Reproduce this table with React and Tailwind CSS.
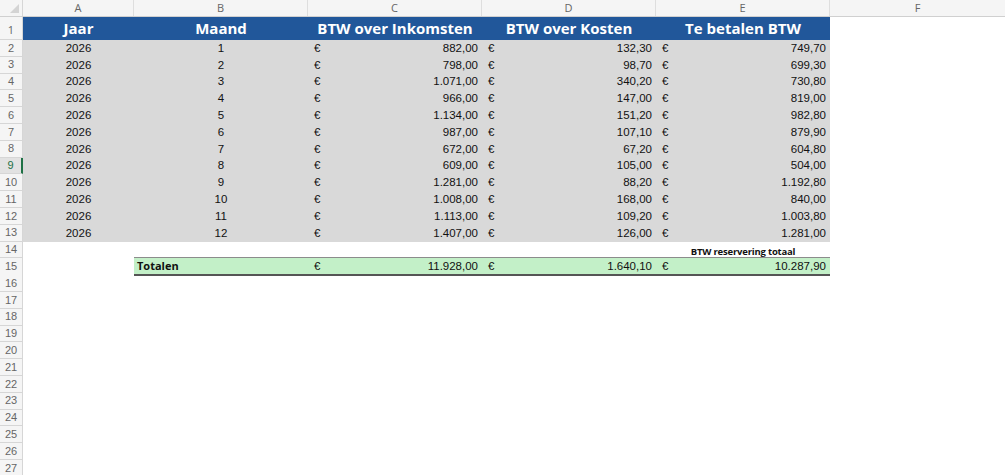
const rows = [
  [1, '882,00', '132,30', '749,70'],
  [2, '798,00', '98,70', '699,30'],
  [3, '1.071,00', '340,20', '730,80'],
  [4, '966,00', '147,00', '819,00'],
  [5, '1.134,00', '151,20', '982,80'],
  [6, '987,00', '107,10', '879,90'],
  [7, '672,00', '67,20', '604,80'],
  [8, '609,00', '105,00', '504,00'],
  [9, '1.281,00', '88,20', '1.192,80'],
  [10, '1.008,00', '168,00', '840,00'],
  [11, '1.113,00', '109,20', '1.003,80'],
  [12, '1.407,00', '126,00', '1.281,00'],
]

const cols = ['A', 'B', 'C', 'D', 'E']
const widths = ['w-[111px]', 'w-[174px]', 'w-[174px]', 'w-[174px]', 'w-[174px]']

function RowHead({ n, selected }) {
  return (
    <div
      className={
        'w-[23px] shrink-0 flex items-center justify-center border-b border-r border-[#d6d6d6] text-[11px] ' +
        (selected ? 'bg-[#e2e2e2] text-[#1e7145] border-r-2 border-r-[#1e7145]' : 'bg-[#f5f5f5] text-[#666]')
      }
    >
      {n}
    </div>
  )
}

function Money({ value, w = 'w-[174px]' }) {
  return (
    <div className={w + ' shrink-0 flex items-center justify-between pl-[6px] pr-[4px]'}>
      <span>€</span>
      <span>{value}</span>
    </div>
  )
}

export default function App() {
  return (
    <div className="w-[1005px] h-[475px] overflow-hidden bg-white text-[#111] font-['Liberation_Sans',Arial,sans-serif] text-[11.5px]">
      {/* column letters */}
      <div className="flex h-[17px] bg-[#f5f5f5] border-b border-[#d0d0d0] text-[#666] font-['Open_Sans',sans-serif] text-[11px]">
        <div className="w-[23px] shrink-0 border-r border-[#d6d6d6] relative">
          <div className="absolute right-[3px] bottom-[3px] w-0 h-0 border-l-[9px] border-l-transparent border-b-[9px] border-b-[#d4d4d4]" />
        </div>
        {cols.map((c, i) => (
          <div key={c} className={widths[i] + ' shrink-0 flex items-center justify-center border-r border-[#dedede]'}>
            {c}
          </div>
        ))}
        <div className="flex-1 flex items-center justify-center">
          <span className="w-[175px] text-center">F</span>
        </div>
      </div>

      {/* header row */}
      <div className="flex h-[23px]">
        <div className="w-[23px] shrink-0 flex items-end justify-center pb-[1px] bg-[#f5f5f5] border-r border-b border-[#d6d6d6] text-[11px] text-[#666] font-['Open_Sans',sans-serif]">
          1
        </div>
        <div className="flex bg-[#21579a] text-white font-bold text-[15px] font-['Open_Sans',sans-serif] leading-none">
          {['Jaar', 'Maand', 'BTW over Inkomsten', 'BTW over Kosten', 'Te betalen BTW'].map((t, i) => (
            <div key={t} className={widths[i] + ' shrink-0 flex items-center justify-center'}>
              {t}
            </div>
          ))}
        </div>
      </div>

      {/* data */}
      {rows.map(([m, inc, cost, pay], i) => (
        <div key={m} className="flex h-[16.8px]">
          <RowHead n={i + 2} selected={i + 2 === 9} />
          <div className="flex bg-[#d9d9d9]">
            <div className="w-[111px] shrink-0 flex items-center justify-center">2026</div>
            <div className="w-[174px] shrink-0 flex items-center justify-center">{m}</div>
            <Money value={inc} />
            <Money value={cost} />
            <Money value={pay} />
          </div>
        </div>
      ))}

      {/* row 14 */}
      <div className="flex h-[16.8px]">
        <RowHead n={14} />
        <div className="w-[633px] shrink-0" />
        <div className="w-[174px] shrink-0 flex items-end justify-center pb-[1.5px] font-['Open_Sans',sans-serif] font-bold text-[9.5px] leading-none tracking-[-0.2px]">
          BTW reservering totaal
        </div>
      </div>

      {/* row 15 totals */}
      <div className="flex h-[16.8px] items-start">
        <RowHead n={15} />
        <div className="w-[111px] shrink-0" />
        <div className="flex h-[16px] box-content -mt-px bg-[#c3f0c8] border-t border-[#8c8c8c] border-b-[2.5px] border-b-[#555]">
          <div className="w-[174px] shrink-0 flex items-center pl-[3px] font-['Open_Sans',sans-serif] font-bold text-[11px]">
            Totalen
          </div>
          <Money value="11.928,00" />
          <Money value="1.640,10" />
          <Money value="10.287,90" />
        </div>
      </div>

      {Array.from({ length: 12 }, (_, i) => (
        <div key={i} className="flex h-[16.8px]">
          <RowHead n={i + 16} />
        </div>
      ))}
    </div>
  )
}
